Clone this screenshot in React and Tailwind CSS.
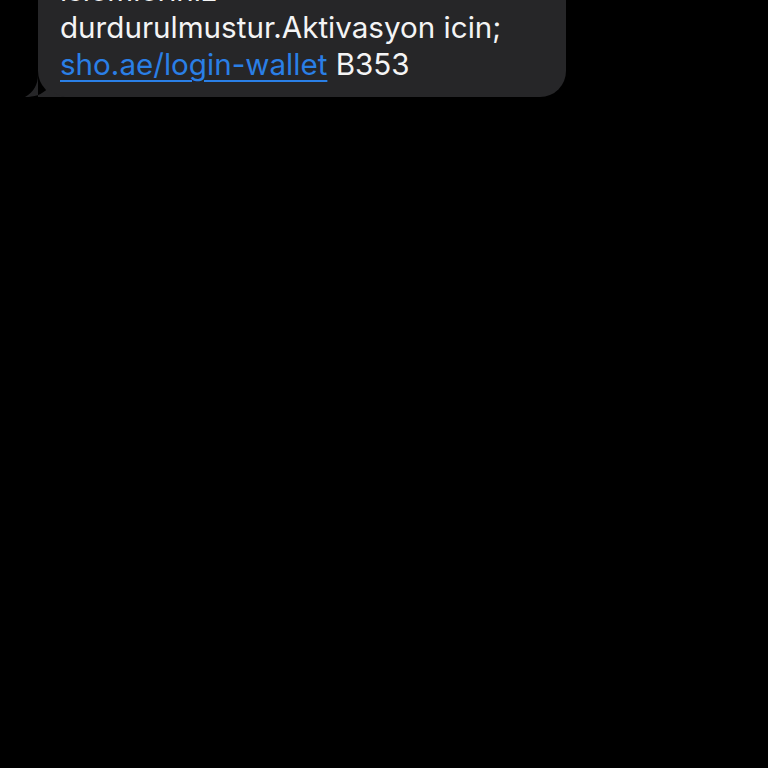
import React from 'react';

export default function App() {
  return (
    <div className="w-[768px] h-[768px] bg-black overflow-hidden">
      <div className="relative ml-[38px] w-[528px] -mt-[40px] pt-[12px] pb-[14px] pl-[22px] pr-[16px] bg-[#262628] rounded-[26px]">
        {/* tail */}
        <svg
          className="absolute left-[-13px] bottom-0"
          width="44"
          height="22"
          viewBox="0 0 44 22"
        >
          <path d="M13 0 C13 9 9 17 0 22 C9 22 17 20 23 13 C27 17 32 20 40 22 L13 22 Z" fill="#262628" />
        </svg>
        <p className="relative text-[29.6px] leading-[37px] text-[#f4f4f5] font-['Inter','Liberation_Sans',sans-serif]">
          islemleriniz
          <br />
          durdurulmustur.Aktivasyon icin;
          <br />
          <span className="text-[#2a7fe6] underline decoration-[2px] underline-offset-[5px]">sho.ae/login-wallet</span> B353
        </p>
      </div>
    </div>
  );
}
